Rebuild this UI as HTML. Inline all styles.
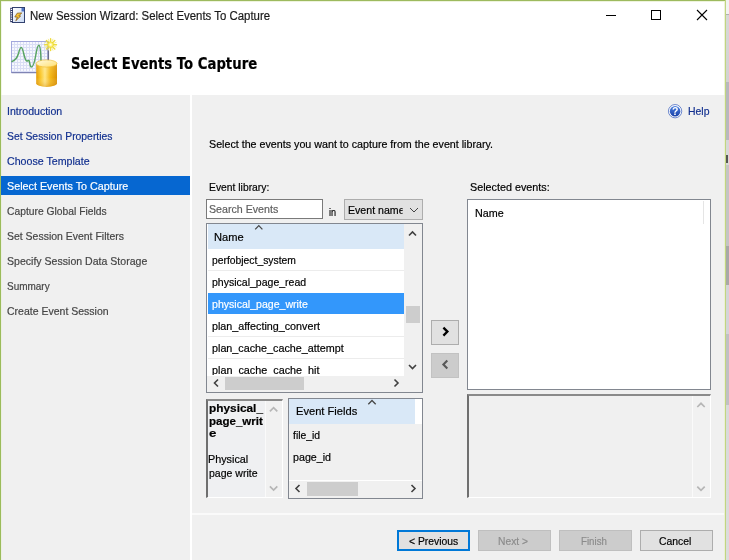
<!DOCTYPE html>
<html><head><meta charset="utf-8"><title>New Session Wizard: Select Events To Capture</title>
<style>
html,body{margin:0;padding:0}
body{width:729px;height:560px;overflow:hidden;position:relative;background:#f0f0f0;font-family:"Liberation Sans",sans-serif;font-size:12px;color:#000}
.a{position:absolute;box-sizing:border-box}
.t{position:absolute;white-space:pre;line-height:1;transform-origin:0 0;font-size:11.5px;-webkit-text-stroke:0.2px currentColor}
svg{position:absolute;overflow:visible}
</style></head><body>
<!-- outside strip on right -->
<div class="a" style="left:726px;top:0;width:3px;height:560px;background:linear-gradient(#f2f2f2 0,#f2f2f2 14px,#b0b0b0 14px,#b0b0b0 15px,#d8d8d8 15px,#d2d2d2 82px,#b8b8be 82px,#b8b8be 140px,#d8d8d8 140px,#d8d8d8 165px,#c4c4c4 165px,#c4c4c4 246px,#a8a8a8 246px,#a8a8a8 285px,#d4d4d8 285px,#d4d4d8 334px,#c0c0c4 334px,#c0c0c4 405px,#d9d9db 405px,#dcdcdc 560px)"></div>
<div class="a" style="left:726px;top:155px;width:2px;height:8px;background:#555"></div>
<!-- window frame -->
<div class="a" style="left:0;top:0;width:726px;height:560px;background:#f0f0f0"></div>
<!-- white header -->
<div class="a" style="left:0;top:0;width:726px;height:95px;background:#fff"></div>
<div class="a" style="left:0;top:0;width:726px;height:1px;background:#9dba5e"></div>
<div class="a" style="left:0;top:1px;width:726px;height:1px;background:#eef4dd"></div>
<div class="a" style="left:0;top:0;width:1px;height:560px;background:#9bbb5a"></div>
<div class="a" style="left:1px;top:1px;width:1px;height:559px;background:#e6eed2;opacity:.5"></div>
<div class="a" style="left:725px;top:0;width:1px;height:560px;background:#c1d582"></div>
<div class="a" style="left:724px;top:1px;width:1px;height:559px;background:#eaf0d0;opacity:.8"></div>
<!-- sidebar separator -->
<div class="a" style="left:190px;top:95px;width:2px;height:465px;background:#fff"></div>
<!-- bottom separator -->
<div class="a" style="left:192px;top:513px;width:532px;height:2px;background:#fafafa"></div>
<!-- sidebar highlight -->
<div class="a" style="left:1px;top:176px;width:189px;height:19px;background:#0667d1"></div>

<!-- title controls -->
<svg style="left:600px;top:5px" width="120" height="22" viewBox="0 0 120 22">
<path d="M6 10.500h10" stroke="#000" stroke-width="1" fill="none"/>
<rect x="51.5" y="5.5" width="9" height="9" stroke="#000" stroke-width="1" fill="none"/>
<path d="M97 5l10 10M107 5l-10 10" stroke="#000" stroke-width="1.1" fill="none"/>
</svg>

<!-- search box -->
<div class="a" style="left:206px;top:199px;width:117px;height:20px;background:#fff;border:1px solid #7a7a7a"></div>
<!-- combo -->
<div class="a" style="left:344px;top:199px;width:79px;height:21px;background:#e1e1e1;border:1px solid #adadad"></div>
<svg style="left:409px;top:206px" width="10" height="8" viewBox="0 0 10 8"><path d="M1 2l4 4 4-4" stroke="#444" stroke-width="1" fill="none"/></svg>

<!-- event list box -->
<div class="a" style="left:206px;top:223px;width:217px;height:170px;background:#fff;border:1px solid #828790"></div>
<div class="a" style="left:208px;top:224px;width:196px;height:25px;background:#d9e8f7"></div>
<div class="a" style="left:208px;top:270px;width:196px;height:1px;background:#ececec"></div>
<div class="a" style="left:208px;top:336px;width:196px;height:1px;background:#ececec"></div>
<div class="a" style="left:208px;top:358px;width:196px;height:1px;background:#ececec"></div>
<div class="a" style="left:208px;top:293px;width:196px;height:21px;background:#3397fb"></div>
<!-- v scrollbar -->
<div class="a" style="left:404px;top:224px;width:18px;height:152px;background:#f0f0f0"></div>
<div class="a" style="left:406px;top:306px;width:14px;height:17px;background:#cdcdcd"></div>
<!-- h scrollbar -->
<div class="a" style="left:207px;top:376px;width:215px;height:16px;background:#f0f0f0"></div>
<div class="a" style="left:225px;top:377px;width:79px;height:13px;background:#cdcdcd"></div>
<svg style="left:200px;top:220px" width="230" height="180" viewBox="0 0 230 180">
<g stroke="#404040" stroke-width="1.6" fill="none">
<path d="M209 15.5l3.5-3.5 3.5 3.5"/>
<path d="M209 145l3.5 3.5 3.5-3.5"/>
<path d="M18 159.5l-3.5 3.5 3.5 3.5"/>
<path d="M194.5 159.5l3.5 3.5-3.5 3.5"/>
</g>
<path d="M55.200 9.400l3.600-3.800 3.600 3.800" stroke="#484848" stroke-width="1.300" fill="none"/>
</svg>

<!-- > < buttons -->
<div class="a" style="left:431px;top:320px;width:28px;height:25px;background:#e1e1e1;border:1px solid #adadad"></div>
<div class="a" style="left:431px;top:353px;width:28px;height:25px;background:#cccccc;border:1px solid #c2c2c2"></div>
<svg style="left:431px;top:320px" width="28" height="60" viewBox="431 320 28 60">
<path d="M443.400 327.600l4 4-4 4" stroke="#000" stroke-width="2.300" fill="none"/>
<path d="M447.300 360.600l-3.900 3.900 3.900 3.900" stroke="#585858" stroke-width="2.100" fill="none"/>
</svg>

<!-- description sunken box -->
<div class="a" style="left:206px;top:399px;width:77px;height:99px;background:#eff0f2;border-left:2px solid #6f6f6f;border-top:2px solid #8a8a8a;border-right:1px solid #fff;border-bottom:1px solid #fff"></div>
<div class="a" style="left:265px;top:401px;width:17px;height:96px;background:#f1f1f1;border-left:1px solid #fafafa"></div>
<svg style="left:264px;top:400px" width="18" height="98" viewBox="0 0 18 98">
<path d="M5.900 11.300l3.700-3.700 3.700 3.700M5.900 86.400l3.700 3.700 3.700-3.700" stroke="#b6b6b6" stroke-width="1.700" fill="none"/>
</svg>

<!-- event fields box -->
<div class="a" style="left:288px;top:398px;width:135px;height:101px;background:#f0f0f0;border:1px solid #828790"></div>
<div class="a" style="left:289px;top:399px;width:126px;height:25px;background:#d9e8f7"></div>
<div class="a" style="left:415px;top:399px;width:7px;height:25px;background:#fff"></div>
<div class="a" style="left:289px;top:480px;width:133px;height:1px;background:#fff"></div>
<div class="a" style="left:307px;top:482px;width:51px;height:14px;background:#cdcdcd"></div>
<svg style="left:288px;top:398px" width="135" height="101" viewBox="0 0 135 101">
<g stroke="#404040" stroke-width="1.6" fill="none">
<path d="M11.500 87l-3.500 3.500 3.500 3.500"/>
<path d="M123.500 87l3.500 3.500-3.500 3.500"/>
</g>
<path d="M80.300 6.300l3.700-3.800 3.700 3.800" stroke="#484848" stroke-width="1.300" fill="none"/>
</svg>

<!-- selected events box -->
<div class="a" style="left:467px;top:199px;width:244px;height:191px;background:#fff;border:1px solid #828790"></div>
<div class="a" style="left:703px;top:201px;width:1px;height:23px;background:#e5e5e5"></div>

<!-- lower right sunken box -->
<div class="a" style="left:467px;top:394px;width:244px;height:104px;background:#f0f0f0;border-left:2px solid #6f6f6f;border-top:2px solid #8a8a8a;border-right:1px solid #fff;border-bottom:1px solid #fff"></div>
<div class="a" style="left:692px;top:396px;width:18px;height:101px;background:#f1f1f1;border-left:1px solid #fafafa"></div>
<svg style="left:692px;top:396px" width="18" height="102" viewBox="0 0 18 102">
<path d="M5.300 11l3.700-3.700 3.700 3.700M5.300 90.600l3.700 3.700 3.700-3.700" stroke="#b6b6b6" stroke-width="1.700" fill="none"/>
</svg>

<!-- bottom buttons -->
<div class="a" style="left:397px;top:530px;width:73px;height:21px;background:#e1e1e1;border:2px solid #0078d7"></div>
<div class="a" style="left:478px;top:530px;width:73px;height:21px;background:#cccccc;border:1px solid #bfbfbf"></div>
<div class="a" style="left:559px;top:530px;width:73px;height:21px;background:#cccccc;border:1px solid #bfbfbf"></div>
<div class="a" style="left:640px;top:530px;width:73px;height:21px;background:#e1e1e1;border:1px solid #adadad"></div>

<!-- help icon -->
<svg style="left:667px;top:103px;will-change:transform" width="16" height="16" viewBox="667 103 16 16">
<defs><linearGradient id="hg" x1="0" y1="0" x2="0" y2="1"><stop offset="0" stop-color="#4d82e2"/><stop offset="1" stop-color="#173fa6"/></linearGradient></defs>
<circle cx="675.1" cy="111.200" r="6.650" fill="#fff" stroke="#4668c0" stroke-width="0.800"/>
<circle cx="675.1" cy="111.200" r="5.300" fill="url(#hg)"/>
<text x="675.1" y="114.900" text-anchor="middle" font-family="Liberation Sans, sans-serif" font-size="10.500" font-weight="700" fill="#fff">?</text>
</svg>

<!--ICONS_START-->
<!-- title icon -->
<svg style="left:10px;top:7px" width="15" height="16" viewBox="0 0 15 16">
<defs><linearGradient id="pg" x1="0" y1="0" x2="1" y2="1"><stop offset="0" stop-color="#ffffff"/><stop offset="1" stop-color="#c9d9f2"/></linearGradient></defs>
<rect x="2.500" y="0.500" width="12" height="15" fill="url(#pg)" stroke="#33426f" stroke-width="1"/>
<rect x="0.200" y="0.800" width="2.500" height="14.400" fill="#2f3866"/>
<g fill="#fff"><rect x="0.800" y="1.800" width="1.300" height="1.200"/><rect x="0.800" y="4" width="1.300" height="1.200"/><rect x="0.800" y="6.200" width="1.300" height="1.200"/><rect x="0.800" y="8.400" width="1.300" height="1.200"/><rect x="0.800" y="10.600" width="1.300" height="1.200"/><rect x="0.800" y="12.800" width="1.300" height="1.200"/></g>
<path d="M11.500 1h2.500v3.500h-2.500z" fill="#4f74c4"/>
<path d="M7.200 6.200l4.600-0.300-3 3 1.900 0.100-4.900 4.800 1.600-3.700-2.600-0.100z" fill="#f7c236" stroke="#7a5210" stroke-width="0.700"/>
</svg>
<!-- big icon -->
<svg style="left:8px;top:36px" width="54" height="54" viewBox="8 36 54 54">
<defs>
<linearGradient id="cy" x1="0" y1="0" x2="1" y2="0"><stop offset="0" stop-color="#e39a00"/><stop offset="0.220" stop-color="#fbc92e"/><stop offset="0.420" stop-color="#ffe684"/><stop offset="0.680" stop-color="#f4b714"/><stop offset="1" stop-color="#d98f00"/></linearGradient>
<linearGradient id="cys" x1="0" y1="0" x2="0" y2="1"><stop offset="0" stop-color="#fff" stop-opacity="0.150"/><stop offset="0.600" stop-color="#fff" stop-opacity="0"/><stop offset="1" stop-color="#c87800" stop-opacity="0.350"/></linearGradient>
<linearGradient id="cyt" x1="0" y1="0" x2="1" y2="1"><stop offset="0" stop-color="#fffbe0"/><stop offset="1" stop-color="#ffdf70"/></linearGradient>
<pattern id="grid" x="11" y="41" width="3" height="3" patternUnits="userSpaceOnUse"><rect width="3" height="3" fill="#f7f8fe"/><path d="M0 0.500h3M0.500 0v3" stroke="#dadef5" stroke-width="1"/></pattern>
<radialGradient id="st"><stop offset="0" stop-color="#ffffff"/><stop offset="0.500" stop-color="#fff48a"/><stop offset="1" stop-color="#ecd82a"/></radialGradient>
</defs>
<rect x="11.500" y="41.500" width="36.500" height="31" fill="url(#grid)" stroke="#a3a7dc" stroke-width="1"/>
<path d="M11.500 72.600h36.700v-31" fill="none" stroke="#7f84b4" stroke-width="1.300"/>
<path d="M12 61.500c3-1 5-3 6.500-8 1-4 1.700-6 2.700-6 1.300 0 2 4 3 8 1 4 1.800 5.500 2.800 5.500s1.200-1 2-0.500c0.800 0.800 0.800 6.500 2.300 6.500 2 0 3.500-6 4.500-12 1-6 1.700-9.700 3-9.700s2 6 2.200 16" fill="none" stroke="#58a462" stroke-width="1.500" stroke-linecap="round"/>
<path d="M48.500 50v11" stroke="#6a6f8a" stroke-width="1.100"/>
<g stroke="#eedb3c" stroke-width="1.400" stroke-linecap="round"><path d="M50.600 38.800v11.800M44.700 44.700h11.800M46.400 40.500l8.400 8.400M54.800 40.500l-8.400 8.400"/></g>
<g stroke="#f6ec8a" stroke-width="0.900" stroke-linecap="round"><path d="M48.300 39.200l4.600 11M52.900 39.200l-4.600 11M45.100 42.400l11 4.600M45.100 47l11-4.600"/></g>
<circle cx="50.600" cy="44.700" r="3" fill="url(#st)"/>
<path d="M36.200 63.500v19.800a10.400 3.600 0 0 0 20.800 0v-19.800z" fill="url(#cy)"/>
<path d="M36.200 63.500v19.800a10.400 3.600 0 0 0 20.800 0v-19.800z" fill="url(#cys)"/>
<ellipse cx="46.600" cy="63.500" rx="10.400" ry="3.600" fill="url(#cyt)" stroke="#eeb82a" stroke-width="0.600"/>
</svg>
<!--ICONS_END-->
<div class="a" style="left:0;top:0;width:729px;height:560px;will-change:transform">
<span class="t" style="left:30.45px;top:10px;transform:scaleX(0.9506);font-size:12px;color:#1a1a1a;">New Session Wizard: Select Events To Capture</span>
<span class="t" style="left:71.12px;top:57px;transform:scaleX(0.8829);font-weight:700;font-size:15px;font-family:'DejaVu Sans', 'Liberation Sans', sans-serif;">Select Events To Capture</span>
<span class="t" style="left:6.88px;top:106px;transform:scaleX(0.9186);color:#12308f;">Introduction</span>
<span class="t" style="left:7.00px;top:131px;transform:scaleX(0.9017);color:#12308f;">Set Session Properties</span>
<span class="t" style="left:7.10px;top:156px;transform:scaleX(0.9258);color:#12308f;">Choose Template</span>
<span class="t" style="left:7.00px;top:181px;transform:scaleX(0.9364);color:#fff;">Select Events To Capture</span>
<span class="t" style="left:7.10px;top:206px;transform:scaleX(0.8955);color:#454545;">Capture Global Fields</span>
<span class="t" style="left:7.00px;top:231px;transform:scaleX(0.9102);color:#454545;">Set Session Event Filters</span>
<span class="t" style="left:7.00px;top:256px;transform:scaleX(0.9183);color:#454545;">Specify Session Data Storage</span>
<span class="t" style="left:7.00px;top:281px;transform:scaleX(0.8673);color:#454545;">Summary</span>
<span class="t" style="left:7.10px;top:306px;transform:scaleX(0.9135);color:#454545;">Create Event Session</span>
<span class="t" style="left:688.09px;top:106px;transform:scaleX(0.9091);color:#12308f;">Help</span>
<span class="t" style="left:209.30px;top:139px;transform:scaleX(0.9302);">Select the events you want to capture from the event library.</span>
<span class="t" style="left:208.80px;top:182px;transform:scaleX(0.8985);">Event library:</span>
<span class="t" style="left:208.60px;top:204px;transform:scaleX(0.9253);color:#5f5f5f;">Search Events</span>
<span class="t" style="left:328.80px;top:207px;transform:scaleX(0.7889);">in</span>
<div class="a" style="left:0;top:0;width:729px;height:560px;clip-path:polygon(345px 200px,402.7px 200px,402.7px 219px,345px 219px)"><span class="t" style="left:348.08px;top:205px;transform:scaleX(0.9217);">Event name</span></div>
<span class="t" style="left:214.03px;top:232px;transform:scaleX(0.9655);">Name</span>
<span class="t" style="left:212.00px;top:255px;transform:scaleX(0.8989);">perfobject_system</span>
<span class="t" style="left:212.00px;top:277px;transform:scaleX(0.9146);">physical_page_read</span>
<span class="t" style="left:212.00px;top:299px;transform:scaleX(0.9192);color:#fff;">physical_page_write</span>
<span class="t" style="left:212.00px;top:321px;transform:scaleX(0.9345);">plan_affecting_convert</span>
<span class="t" style="left:212.00px;top:343px;transform:scaleX(0.9362);">plan_cache_cache_attempt</span>
<div class="a" style="left:0;top:0;width:729px;height:560px;clip-path:polygon(208px 355px,404px 355px,404px 375px,208px 375px)"><span class="t" style="left:212.00px;top:365px;transform:scaleX(0.9391);">plan_cache_cache_hit</span></div>
<span class="t" style="left:470.10px;top:182px;transform:scaleX(0.9369);">Selected events:</span>
<span class="t" style="left:475.27px;top:208px;transform:scaleX(0.9345);">Name</span>
<span class="t" style="left:208.60px;top:403px;transform:scaleX(1.0302);font-weight:700;">physical_</span>
<span class="t" style="left:208.60px;top:416px;transform:scaleX(1.0037);font-weight:700;">page_writ</span>
<span class="t" style="left:208.60px;top:428px;transform:scaleX(1.1500);font-weight:700;">e</span>
<span class="t" style="left:208.06px;top:454px;transform:scaleX(0.9390);">Physical</span>
<span class="t" style="left:209.00px;top:468px;transform:scaleX(0.9151);">page write</span>
<span class="t" style="left:295.83px;top:406px;transform:scaleX(0.9677);">Event Fields</span>
<span class="t" style="left:293.00px;top:430px;transform:scaleX(0.9000);">file_id</span>
<span class="t" style="left:293.20px;top:452px;transform:scaleX(0.9293);">page_id</span>
<span class="t" style="left:408.50px;top:536px;transform:scaleX(0.9000);">&lt; Previous</span>
<span class="t" style="left:498.41px;top:536px;transform:scaleX(0.8937);color:#8c8c8c;">Next &gt;</span>
<span class="t" style="left:581.26px;top:536px;transform:scaleX(0.8448);color:#8c8c8c;">Finish</span>
<span class="t" style="left:658.80px;top:536px;transform:scaleX(0.9057);">Cancel</span>
</div>
</body></html>
